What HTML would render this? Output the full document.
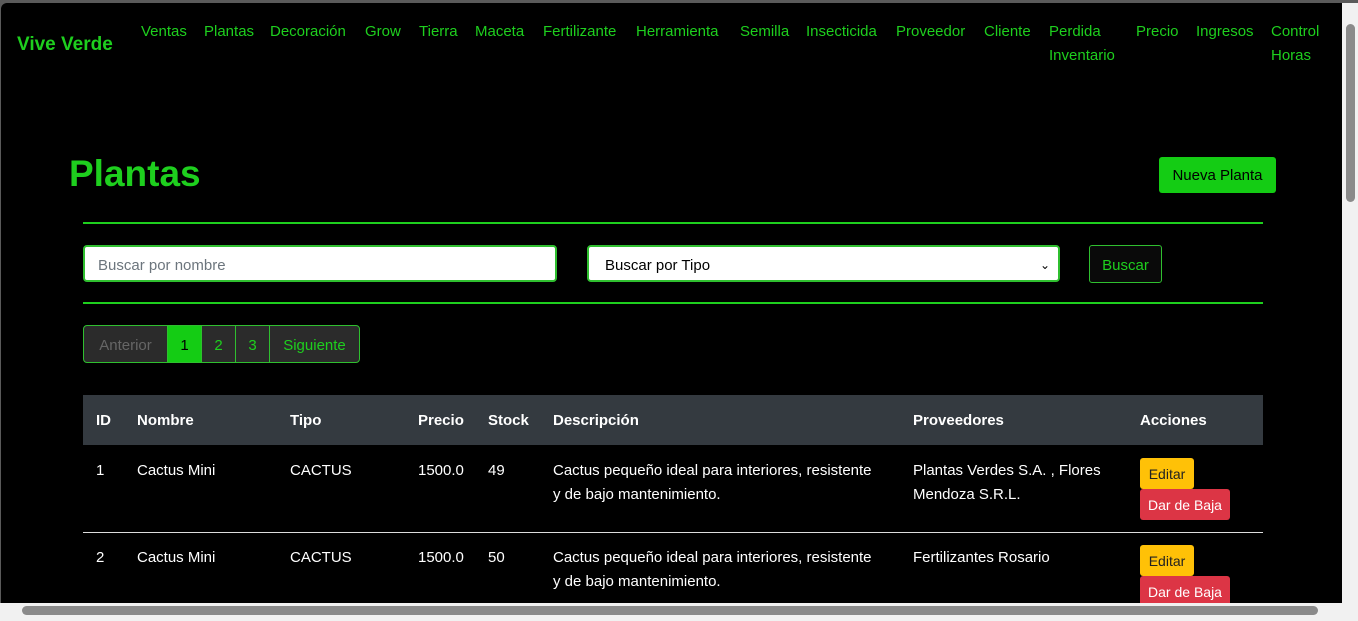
<!DOCTYPE html>
<html><head><meta charset="utf-8"><style>
*{box-sizing:border-box;margin:0;padding:0}
html,body{width:1358px;height:621px;overflow:hidden;background:#5a5a5a;font-family:"Liberation Sans",sans-serif}
#vp{position:absolute;left:1px;top:3px;width:1341px;height:600px;background:#000;overflow:hidden;border-radius:6px 0 0 0}
.nav a{position:absolute;color:#1ecf1e;font-size:15px;line-height:24px;text-decoration:none}
.brand{position:absolute;left:16px;top:31px;color:#1ecf1e;font-weight:bold;font-size:19px}
h1{position:absolute;left:68px;top:150px;color:#1ecf1e;font-size:37px;font-weight:bold}
.btnN{position:absolute;left:1158px;top:154px;width:117px;height:36px;background:#14cc14;color:#000;font-size:15px;line-height:38px;text-align:center;border-radius:3px}
.hr{position:absolute;left:82px;width:1180px;height:2px;background:#1ecf1e}
.inp{position:absolute;top:242px;height:37px;background:#fff;border:2px solid #2fbf2f;border-radius:4px;color:#6c757d;font-size:15px;line-height:37px;padding-left:13px}
.bus{position:absolute;left:1088px;top:242px;width:73px;height:38px;border:1px solid #2fbf2f;border-radius:3px;background:#0a0a0a;color:#1ecf1e;font-size:15px;line-height:40px;text-align:center}
.pg{position:absolute;left:82px;top:322px;height:38px;display:flex;border:1px solid #2fbf2f;border-radius:4px;overflow:hidden;background:#2b2b2b}
.pg div{height:36px;line-height:40px;font-size:15px;color:#1ecf1e;text-align:center;border-left:1px solid #2fbf2f}
.pg div:first-child{border-left:none;color:#666}
.th{position:absolute;left:82px;top:392px;width:1180px;height:50px;background:#343a40}
.t{position:absolute;color:#fff;font-size:15px;line-height:24px}
.b{font-weight:bold}
.row{position:absolute;left:82px;width:1180px;height:1px;background:#ddd}
.ed{position:absolute;left:1139px;width:54px;height:31px;background:#ffc107;color:#222;font-size:14px;line-height:32px;text-align:center;border-radius:3px}
.db{position:absolute;left:1139px;width:90px;height:31px;background:#dc3545;color:#fff;font-size:14px;line-height:32px;text-align:center;border-radius:3px}
</style></head><body>
<div id="vp">
<div class="brand">Vive Verde</div>
<div class="nav">
<a style="left:140px;top:17px">Ventas</a><a style="left:203px;top:17px">Plantas</a><a style="left:269px;top:17px">Decoración</a><a style="left:364px;top:17px">Grow</a><a style="left:418px;top:17px">Tierra</a><a style="left:474px;top:17px">Maceta</a><a style="left:542px;top:17px">Fertilizante</a><a style="left:635px;top:17px">Herramienta</a><a style="left:739px;top:17px">Semilla</a><a style="left:805px;top:17px">Insecticida</a><a style="left:895px;top:17px">Proveedor</a><a style="left:983px;top:17px">Cliente</a><a style="left:1048px;top:17px">Perdida<br>Inventario</a><a style="left:1135px;top:17px">Precio</a><a style="left:1195px;top:17px">Ingresos</a><a style="left:1270px;top:17px">Control<br>Horas</a>
</div>
<h1>Plantas</h1>
<div class="btnN">Nueva Planta</div>
<div class="hr" style="top:219px"></div>
<div class="inp" style="left:82px;width:474px">Buscar por nombre</div>
<div class="inp" style="left:586px;width:473px;color:#000;padding-left:16px">Buscar por Tipo<span style="position:absolute;right:8px;font-size:12px">&#8964;</span></div>
<div class="bus">Buscar</div>
<div class="hr" style="top:299px"></div>
<div class="pg"><div style="width:83px">Anterior</div><div style="width:34px;background:#14cc14;color:#000">1</div><div style="width:34px">2</div><div style="width:34px">3</div><div style="width:90px">Siguiente</div></div>
<div class="th"></div>
<div class="t b" style="left:95px;top:406px">ID</div><div class="t b" style="left:136px;top:406px">Nombre</div><div class="t b" style="left:289px;top:406px">Tipo</div><div class="t b" style="left:417px;top:406px">Precio</div><div class="t b" style="left:487px;top:406px">Stock</div><div class="t b" style="left:552px;top:406px">Descripción</div><div class="t b" style="left:912px;top:406px">Proveedores</div><div class="t b" style="left:1139px;top:406px">Acciones</div>
<div class="t" style="left:95px;top:456px">1</div><div class="t" style="left:136px;top:456px">Cactus Mini</div><div class="t" style="left:289px;top:456px">CACTUS</div><div class="t" style="left:417px;top:456px">1500.0</div><div class="t" style="left:487px;top:456px">49</div><div class="t" style="left:552px;top:456px">Cactus pequeño ideal para interiores, resistente<br>y de bajo mantenimiento.</div><div class="t" style="left:912px;top:456px">Plantas Verdes S.A. , Flores<br>Mendoza S.R.L.</div>
<div class="ed" style="top:455px">Editar</div><div class="db" style="top:486px">Dar de Baja</div>
<div class="row" style="top:529px"></div>
<div class="t" style="left:95px;top:543px">2</div><div class="t" style="left:136px;top:543px">Cactus Mini</div><div class="t" style="left:289px;top:543px">CACTUS</div><div class="t" style="left:417px;top:543px">1500.0</div><div class="t" style="left:487px;top:543px">50</div><div class="t" style="left:552px;top:543px">Cactus pequeño ideal para interiores, resistente<br>y de bajo mantenimiento.</div><div class="t" style="left:912px;top:543px">Fertilizantes Rosario</div>
<div class="ed" style="top:542px">Editar</div><div class="db" style="top:573px">Dar de Baja</div>
</div>
<div style="position:absolute;left:1342px;top:3px;width:16px;height:600px;background:#f1f1f1"></div>
<div style="position:absolute;left:1346px;top:24px;width:9px;height:178px;background:#8a8a8a;border-radius:5px"></div>
<div style="position:absolute;left:0;top:603px;width:1358px;height:18px;background:#f1f1f1"></div>
<div style="position:absolute;left:22px;top:606px;width:1296px;height:9px;background:#8a8a8a;border-radius:5px"></div>
</body></html>
